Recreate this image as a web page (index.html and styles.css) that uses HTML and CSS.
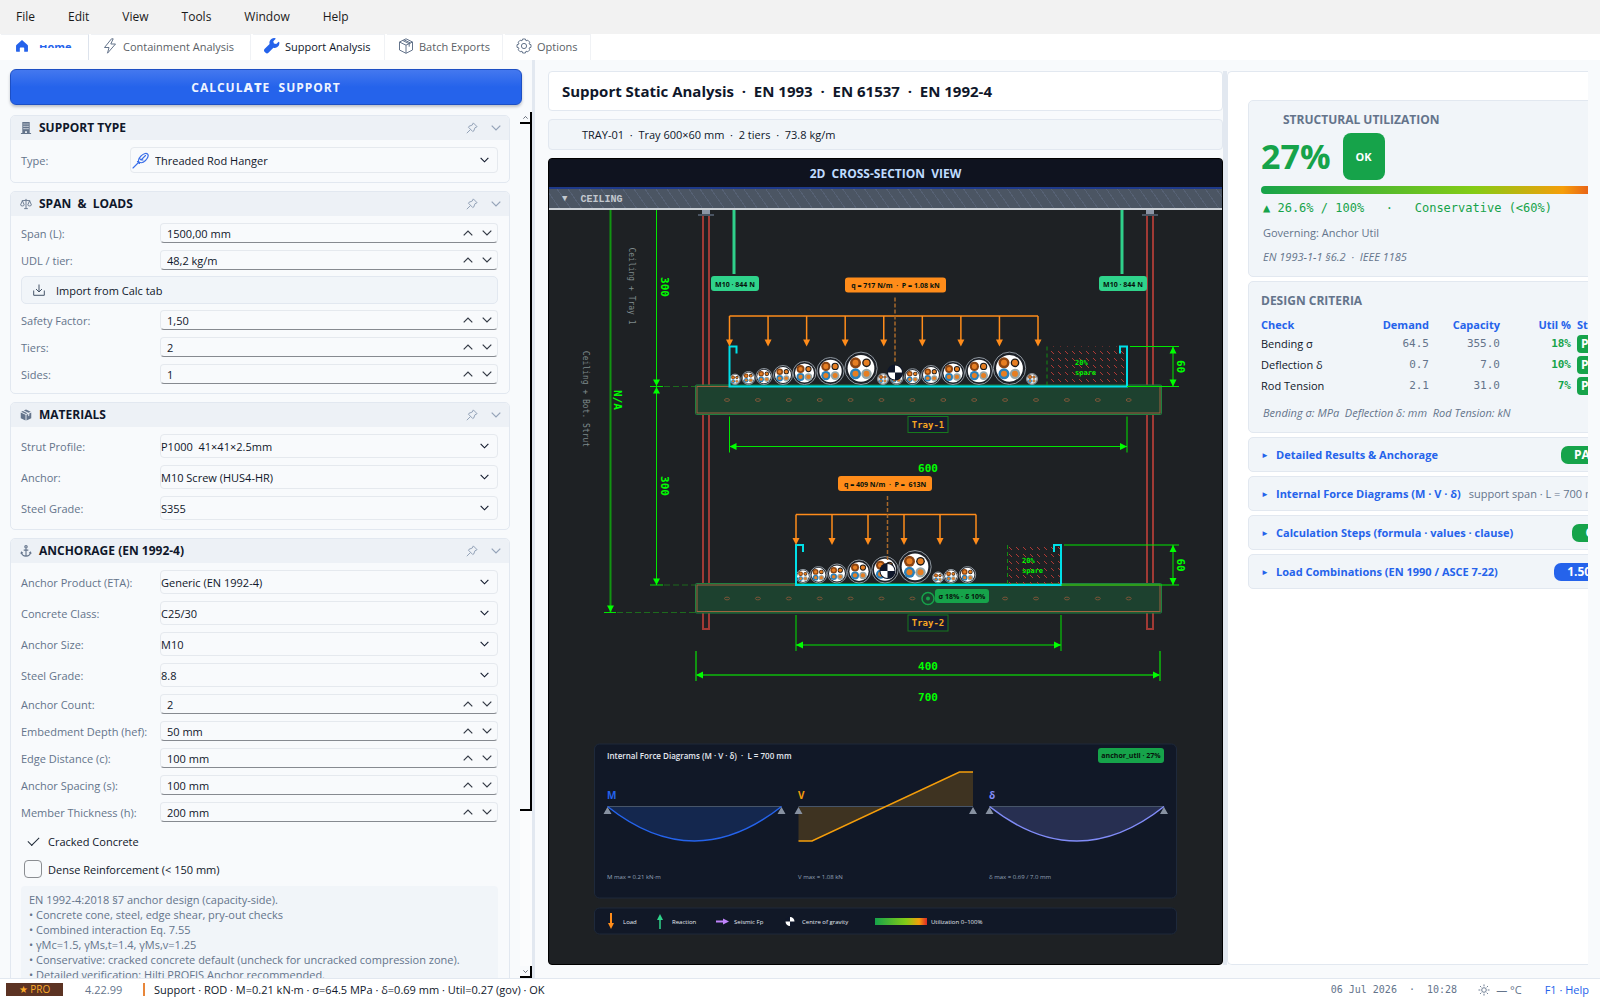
FILE: index.html
```html
<!DOCTYPE html>
<html lang="en">
<head>
    <meta charset="UTF-8">
    <meta name="viewport" content="width=device-width, initial-scale=1.0">
    <title>Support Analysis</title>
    <link rel="stylesheet" href="styles.css">
</head>
<body>
    <!-- icon sprite -->
    <svg class="sprite" aria-hidden="true">
        <symbol id="i-home" viewBox="0 0 16 16"><path fill="currentColor" d="M8 1.2 1.6 6.8c-.3.3-.4.6-.4.9v6c0 .6.4 1 1 1h3.300V10.500c0-.5.3-.8.8-.8h3.400c.5 0 .8.3.8.8v4.200h3.300c.6 0 1-.4 1-1v-6c0-.3-.1-.6-.4-.9z"/></symbol>
        <symbol id="i-bolt" viewBox="0 0 16 16"><path fill="none" stroke="currentColor" stroke-linejoin="round" d="M9.500.8 2.500 9.500H7L5.500 15.200 13.500 6H8.800L11.200.8z"/></symbol>
        <symbol id="i-wrench" viewBox="0 0 16 16"><path fill="currentColor" d="M15.200 4.100a.5.5 0 0 0-.8-.2l-2.200 2.200-2.300-.6-.6-2.300L11.500 1a.5.5 0 0 0-.2-.8A4.700 4.700 0 0 0 5.600 6L1 10.600a2.500 2.500 0 0 0 0 3.700 2.500 2.500 0 0 0 3.700.2l4.700-4.700a4.700 4.700 0 0 0 5.800-5.700z"/></symbol>
        <symbol id="i-box" viewBox="0 0 16 16"><path fill="none" stroke="currentColor" stroke-linejoin="round" d="M8 .8 14.500 4v8L8 15.300 1.500 12V4zM1.500 4 8 7.200 14.500 4M8 7.200v8M4.700 2.500l6.500 3.200v3M6 1.800l6.500 3.200"/></symbol>
        <symbol id="i-boxfill" viewBox="0 0 16 16"><path fill="currentColor" d="M1 4.800v7.400l6.400 3V7.800zM8.600 7.800v7.400l6.400-3V4.800l-2.600 1.300v3l-1.400.7v-3zM1.600 3.700 8 6.800l1.900-1L3.800 2.700zM5.200 2l6 3 3.200-1.300L8 .8z"/></symbol>
        <symbol id="i-gear" viewBox="0 0 16 16"><g fill="none" stroke="currentColor"><path stroke-linejoin="round" d="m6.600 1 2.800 0 .6 1.800 1.800-.6 2 2-.8 1.700 2 .8v2.600l-2 .8.8 1.700-2 2-1.800-.6L9.400 15H6.600L6 13.200l-1.800.6-2-2 .8-1.700-2-.8V6.700l2-.8-.8-1.700 2-2L6 2.800z"/><circle cx="8" cy="8" r="2.600"/></g></symbol>
        <symbol id="i-building" viewBox="0 0 12 13"><path fill="currentColor" fill-rule="evenodd" d="M2 0h8v12h1.500v1H.5v-1H2zM3.300 1.500v1.300h1.200V1.500zm2.100 0v1.300h1.200V1.500zm2.100 0v1.300h1.200V1.500zM3.300 4v1.300h1.200V4zm2.100 0v1.300h1.200V4zm2.100 0v1.300h1.200V4zM3.300 6.500v1.300h1.200V6.500zm2.100 0v1.300h1.200V6.500zm2.100 0v1.300h1.200V6.500zM5 10v2h2v-2z"/></symbol>
        <symbol id="i-scales" viewBox="0 0 13 12"><path fill="none" stroke="currentColor" d="M6.500.5v10.500M4.500 11h4M2 2.500 6.500 2 11 2.500M2.600 2.500.6 7c0 1.500 4 1.500 4 0zM10.400 2.500l-2 4.500c0 1.500 4 1.500 4 0z"/></symbol>
        <symbol id="i-anchor" viewBox="0 0 12 13"><g fill="none" stroke="currentColor" stroke-width="1.2"><circle cx="6" cy="2" r="1.300"/><path d="M6 3.500V12M3.500 5.500h5M1 8c.4 2.500 2.500 4 5 4s4.600-1.500 5-4M.5 9.500 1.100 7.800l1.500 1M11.500 9.500l-.6-1.700-1.500 1"/></g></symbol>
        <symbol id="i-pin" viewBox="0 0 12 12"><path fill="none" stroke="currentColor" stroke-linejoin="round" d="M7.300.9 11.100 4.700 9 5.700 7.700 9 6.800 9.600 2.400 5.200 3 4.300 6.300 3zM4.500 7.500.8 11.200"/></symbol>
        <symbol id="i-down" viewBox="0 0 10 6"><path fill="none" stroke="currentColor" stroke-width="1.200" d="M.7.7 5 5 9.300.7"/></symbol>
        <symbol id="i-up" viewBox="0 0 10 6"><path fill="none" stroke="currentColor" stroke-width="1.200" d="M.7 5.300 5 1l4.300 4.300"/></symbol>
        <symbol id="i-import" viewBox="0 0 12 12"><path fill="none" stroke="currentColor" d="M6 .5v7M3 5l3 3 3-3M.7 6.500v4.800h10.600V6.500"/></symbol>
        <symbol id="i-rod" viewBox="0 0 17 17"><g fill="none" stroke="currentColor" stroke-width="1.100" stroke-linecap="round"><path d="M1 16 6.500 10.500M5.500 9.500 7.500 11.500M7 9.800C5.500 8 7 6 9 4s5-3.500 6.500-2 0 4.500-2 6.500-4.500 3-6.500 1.300zM9 8l4.500-4.500M7.500 6.500 9 8l2 0"/></g></symbol>
        <symbol id="i-sun" viewBox="0 0 13 13"><g fill="none" stroke="currentColor"><circle cx="6.500" cy="6.500" r="2.500"/><path d="M6.500.5v2M6.500 10.500v2M.5 6.500h2M10.500 6.500h2M2.200 2.200l1.400 1.400M9.400 9.400l1.400 1.400M2.200 10.800l1.400-1.400M9.400 3.600l1.400-1.400"/></g></symbol>
    </svg>

    <nav class="menubar">
        <button>File</button>
        <button>Edit</button>
        <button>View</button>
        <button>Tools</button>
        <button>Window</button>
        <button>Help</button>
    </nav>

    <nav class="tabs">
        <a href="#" class="tab home"><svg class="icon16"><use href="#i-home"/></svg><span class="sliver">Home</span></a>
        <a href="#" class="tab"><svg class="icon16"><use href="#i-bolt"/></svg>Containment Analysis</a>
        <a href="#" class="tab current"><svg class="icon16"><use href="#i-wrench"/></svg>Support Analysis</a>
        <a href="#" class="tab"><svg class="icon16"><use href="#i-box"/></svg>Batch Exports</a>
        <a href="#" class="tab"><svg class="icon16"><use href="#i-gear"/></svg>Options</a>
    </nav>

    <main class="workspace">
        <aside class="sidebar">
            <button class="calculate">CALCUL<b>AT</b>E&nbsp; SUPPORT</button>
            <div class="form-area">
                <form class="groups">
                    <section class="group">
                        <header class="group-header">
                            <svg class="icon12"><use href="#i-building"/></svg>
                            <h2>SUPPORT TYPE</h2>
                            <svg class="icon12 muted"><use href="#i-pin"/></svg>
                            <svg class="chevron muted"><use href="#i-down"/></svg>
                        </header>
                        <div class="group-body">
                            <div class="row type-row">
                                <label for="type">Type:</label>
                                <div class="combo tall">
                                    <svg class="combo-icon"><use href="#i-rod"/></svg>
                                    <select id="type"><option>Threaded Rod Hanger</option></select>
                                    <svg class="chevron"><use href="#i-down"/></svg>
                                </div>
                            </div>
                        </div>
                    </section>

                    <section class="group">
                        <header class="group-header">
                            <svg class="icon12"><use href="#i-scales"/></svg>
                            <h2>SPAN&nbsp; &amp;&nbsp; LOADS</h2>
                            <svg class="icon12 muted"><use href="#i-pin"/></svg>
                            <svg class="chevron muted"><use href="#i-down"/></svg>
                        </header>
                        <div class="group-body">
                            <div class="row"><label for="span">Span (L):</label><div class="spin"><input type="text" id="span" value="1500,00 mm"></div></div>
                            <div class="row"><label for="udl">UDL / tier:</label><div class="spin"><input type="text" id="udl" value="48,2 kg/m"></div></div>
                            <button type="button" class="import"><svg class="icon12"><use href="#i-import"/></svg>Import from Calc tab</button>
                            <div class="row"><label for="sf">Safety Factor:</label><div class="spin"><input type="text" id="sf" value="1,50"></div></div>
                            <div class="row"><label for="tiers">Tiers:</label><div class="spin"><input type="text" id="tiers" value="2"></div></div>
                            <div class="row"><label for="sides">Sides:</label><div class="spin"><input type="text" id="sides" value="1"></div></div>
                        </div>
                    </section>

                    <section class="group">
                        <header class="group-header">
                            <svg class="icon12"><use href="#i-boxfill"/></svg>
                            <h2>MATERIALS</h2>
                            <svg class="icon12 muted"><use href="#i-pin"/></svg>
                            <svg class="chevron muted"><use href="#i-down"/></svg>
                        </header>
                        <div class="group-body">
                            <div class="row"><label for="strut">Strut Profile:</label><div class="combo"><select id="strut"><option>P1000&nbsp; 41×41×2.5mm</option></select><svg class="chevron"><use href="#i-down"/></svg></div></div>
                            <div class="row"><label for="anchor">Anchor:</label><div class="combo"><select id="anchor"><option>M10 Screw (HUS4-HR)</option></select><svg class="chevron"><use href="#i-down"/></svg></div></div>
                            <div class="row"><label for="steel">Steel Grade:</label><div class="combo"><select id="steel"><option>S355</option></select><svg class="chevron"><use href="#i-down"/></svg></div></div>
                        </div>
                    </section>

                    <section class="group">
                        <header class="group-header">
                            <svg class="icon12"><use href="#i-anchor"/></svg>
                            <h2>ANCHORAGE (EN 1992-4)</h2>
                            <svg class="icon12 muted"><use href="#i-pin"/></svg>
                            <svg class="chevron muted"><use href="#i-down"/></svg>
                        </header>
                        <div class="group-body">
                            <div class="row"><label for="product">Anchor Product (ETA):</label><div class="combo"><select id="product"><option>Generic (EN 1992-4)</option></select><svg class="chevron"><use href="#i-down"/></svg></div></div>
                            <div class="row"><label for="concrete">Concrete Class:</label><div class="combo"><select id="concrete"><option>C25/30</option></select><svg class="chevron"><use href="#i-down"/></svg></div></div>
                            <div class="row"><label for="size">Anchor Size:</label><div class="combo"><select id="size"><option>M10</option></select><svg class="chevron"><use href="#i-down"/></svg></div></div>
                            <div class="row"><label for="grade">Steel Grade:</label><div class="combo"><select id="grade"><option>8.8</option></select><svg class="chevron"><use href="#i-down"/></svg></div></div>
                            <div class="row"><label for="count">Anchor Count:</label><div class="spin"><input type="text" id="count" value="2"></div></div>
                            <div class="row"><label for="hef">Embedment Depth (hef):</label><div class="spin"><input type="text" id="hef" value="50 mm"></div></div>
                            <div class="row"><label for="edge">Edge Distance (c):</label><div class="spin"><input type="text" id="edge" value="100 mm"></div></div>
                            <div class="row"><label for="spacing">Anchor Spacing (s):</label><div class="spin"><input type="text" id="spacing" value="100 mm"></div></div>
                            <div class="row"><label for="thickness">Member Thickness (h):</label><div class="spin"><input type="text" id="thickness" value="200 mm"></div></div>
                            <div class="checks">
                                <label><input type="checkbox" checked> Cracked Concrete</label>
                                <label><input type="checkbox"> Dense Reinforcement (&lt; 150 mm)</label>
                            </div>
                            <div class="note">
                                EN 1992-4:2018 §7 anchor design (capacity-side).<br>
                                • Concrete cone, steel, edge shear, pry-out checks<br>
                                • Combined interaction Eq. 7.55<br>
                                • γMc=1.5, γMs,t=1.4, γMs,v=1.25<br>
                                • Conservative: cracked concrete default (uncheck for uncracked compression zone).<br>
                                • Detailed verification: Hilti PROFIS Anchor recommended.
                            </div>
                        </div>
                    </section>
                </form>
                <div class="scrollbar">
                    <button class="scroll-button" aria-label="Scroll up"><svg class="scroll-arrow"><use href="#i-up"/></svg></button>
                    <div class="scroll-thumb"></div>
                    <div class="scroll-track"></div>
                    <button class="scroll-button" aria-label="Scroll down"><svg class="scroll-arrow"><use href="#i-down"/></svg></button>
                </div>
            </div>
        </aside>

        <div class="splitter"></div>

        <section class="center">
            <h1 class="page-title">Support Static Analysis&nbsp; ·&nbsp; EN 1993&nbsp; ·&nbsp; EN 61537&nbsp; ·&nbsp; EN 1992-4</h1>
            <div class="summary">TRAY-01&nbsp; ·&nbsp; Tray 600×60 mm&nbsp; ·&nbsp; 2 tiers&nbsp; ·&nbsp; 73.8 kg/m</div>
            <div class="viewer">
                <div class="viewer-title">2D&nbsp; CROSS-SECTION&nbsp; VIEW</div>
                <div class="ceiling"><span class="ceiling-mark">▼</span>CEILING</div>
                <svg class="drawing" id="drawing" viewBox="549 210 673 754" preserveAspectRatio="xMidYMin meet">
                    <defs>
                        <linearGradient id="util-gradient">
                            <stop offset="0" stop-color="#16a34a"/>
                            <stop offset="0.6" stop-color="#84cc16"/>
                            <stop offset="0.85" stop-color="#f59e0b"/>
                            <stop offset="1" stop-color="#dc2626"/>
                        </linearGradient>
                        <pattern id="spare-hatch" width="7" height="7" patternUnits="userSpaceOnUse">
                            <path d="M1 1 4 4" stroke="#b03a35"/>
                        </pattern>
                    </defs>

                    <!-- hanger rods and nuts -->
                    <g class="rod">
                        <rect x="703" y="205" width="6" height="424"/>
                        <rect x="1147" y="205" width="6" height="424"/>
                    </g>
                    <g fill="#6b7280">
                        <rect x="702" y="210" width="8" height="4" fill="#8b95a5"/>
                        <rect x="698" y="214" width="16" height="2" fill="#4b5563"/>
                        <rect x="1146" y="210" width="8" height="4" fill="#8b95a5"/>
                        <rect x="1142" y="214" width="16" height="2" fill="#4b5563"/>
                    </g>

                    <!-- rod reactions -->
                    <path d="M734 208V274M1122 208V274" stroke="#2fd08a" stroke-width="3"/>
                    <rect x="711" y="276" width="48" height="15" rx="3" fill="#2fd38b"/>
                    <rect x="1099" y="276" width="48" height="15" rx="3" fill="#2fd38b"/>
                    <text class="chip" x="735" y="287">M10 · 844 N</text>
                    <text class="chip" x="1123" y="287">M10 · 844 N</text>

                    <g id="tiers-layer"></g>

                    <!-- left hand dimensions -->
                    <g class="dim">
                        <path class="dim-soft" d="M610.500 210V613"/>
                        <path d="M656.500 210V585M650 386.500H663M650 585H663M604 612.500H616"/>
                        <path class="dim-dash" d="M664 386.500H695M664 585H695M617 612.500H695"/>
                    </g>
                    <g class="arrow-head">
                        <path d="M656.500 386l-3.500-6.500h7zM656.500 387l-3.500 6.500h7zM656.500 585l-3.500-6.500h7zM610.500 612l-3.500-6.500h7z"/>
                    </g>
                    <text class="dim-text" transform="translate(661 287) rotate(90)">300</text>
                    <text class="dim-text" transform="translate(661 486) rotate(90)">300</text>
                    <text class="dim-text" transform="translate(614 400) rotate(90)">N/A</text>
                    <text class="dim-note" transform="translate(629 286) rotate(90)">Ceiling + Tray 1</text>
                    <text class="dim-note" transform="translate(583 399) rotate(90)">Ceiling + Bot. Strut</text>

                    <!-- overall width -->
                    <path class="dim-soft" d="M696 651V681M1160 651V681M696 675H1160"/>
                    <path class="arrow-head" d="M696 675l7-3.500v7zM1160 675l-7-3.500v7z"/>
                    <text class="dim-text" x="928" y="701">700</text>

                    <!-- utilization marker on the bottom strut -->
                    <circle cx="928" cy="598.500" r="6" fill="none" stroke="#16a34a" stroke-width="1.500"/>
                    <circle cx="928" cy="598.500" r="2" fill="#16a34a"/>
                    <rect x="935" y="589" width="54" height="14" rx="3" fill="#16a34a"/>
                    <text class="chip" x="962" y="599">σ 18% · δ 10%</text>

                    <!-- internal force diagrams -->
                    <rect class="panel" x="594.500" y="744" width="582" height="154" rx="5"/>
                    <text class="panel-title" x="607" y="759">Internal Force Diagrams (M · V · δ)&#160; ·&#160; L = 700 mm</text>
                    <rect x="1098" y="748" width="66" height="15" rx="3" fill="#16a34a"/>
                    <text class="chip" x="1131" y="758">anchor_util · 27%</text>
                    <text class="force-name" x="607" y="799" fill="#2563eb">M</text>
                    <text class="force-name" x="798" y="799" fill="#f59e0b">V</text>
                    <text class="force-name" x="989" y="799" fill="#818cf8">δ</text>
                    <path d="M607.500 806.500Q694.500 875.500 781.500 806.500z" fill="#2563eb" fill-opacity="0.2"/>
                    <path d="M798.500 806.500V841H812L959.500 772H973V806.500z" fill="#f59e0b" fill-opacity="0.2"/>
                    <path d="M989.500 806.500Q1077 875.500 1164 806.500z" fill="#818cf8" fill-opacity="0.2"/>
                    <path d="M607.500 806.500H781.500M798.500 806.500H973M989.500 806.500H1164" stroke="#475569"/>
                    <g fill="none" stroke-width="1.500">
                        <path d="M607.500 806.500Q694.500 875.500 781.500 806.500" stroke="#2563eb"/>
                        <path d="M798.500 841H812L959.500 772H973" stroke="#f59e0b"/>
                        <path d="M989.500 806.500Q1077 875.500 1164 806.500" stroke="#818cf8"/>
                    </g>
                    <path fill="#8791a1" d="M607.500 807l4 7h-8zM781.500 807l4 7h-8zM798.500 807l4 7h-8zM973 807l4 7h-8zM989.500 807l4 7h-8zM1164 807l4 7h-8z"/>
                    <text class="force-max" x="607" y="879">M max = 0.21 kN·m</text>
                    <text class="force-max" x="798" y="879">V max = 1.08 kN</text>
                    <text class="force-max" x="989" y="879">δ max = 0.69 / 7.0 mm</text>

                    <!-- legend -->
                    <rect class="panel" x="594.500" y="908" width="582" height="26" rx="5"/>
                    <path d="M611 913V924" stroke="#ff8c1a" stroke-width="2"/>
                    <path d="M611 929l-3-6h6z" fill="#ff8c1a"/>
                    <path d="M660 929V918" stroke="#2fd38b" stroke-width="1.500"/>
                    <path d="M660 914l-3 6h6z" fill="#2fd38b"/>
                    <path d="M716 921.500H724" stroke="#c084fc" stroke-width="2"/>
                    <path d="M729 921.500l-6-3v6z" fill="#c084fc"/>
                    <circle cx="790" cy="921.500" r="4.500" fill="#0f172a"/>
                    <path d="M790 921.500V917a4.500 4.500 0 0 1 4.500 4.500zM790 921.500V926a4.500 4.500 0 0 1-4.500-4.500z" fill="#fff"/>
                    <rect x="875" y="918" width="52" height="7" fill="url(#util-gradient)"/>
                    <text class="legend" x="623" y="924">Load</text>
                    <text class="legend" x="672" y="924">Reaction</text>
                    <text class="legend" x="734" y="924">Seismic Fp</text>
                    <text class="legend" x="802" y="924">Centre of gravity</text>
                    <text class="legend" x="931" y="924">Utilization 0–100%</text>
                </svg>
            </div>
        </section>

        <div class="splitter inset"></div>

        <section class="results">
            <div class="results-content">
                <div class="card utilization">
                    <h3>STRUCTURAL UTILIZATION</h3>
                    <div class="score"><span class="score-value">27%</span><span class="score-badge">OK</span></div>
                    <div class="util-bar"></div>
                    <p class="util-line">▲ 26.6% / 100%&nbsp;&nbsp; ·&nbsp;&nbsp; Conservative (&lt;60%)</p>
                    <p class="hint">Governing: Anchor Util</p>
                    <p class="hint"><i>EN 1993-1-1 §6.2&nbsp; ·&nbsp; IEEE 1185</i></p>
                </div>
                <div class="card criteria">
                    <h3>DESIGN CRITERIA</h3>
                    <table>
                        <thead>
                            <tr><th>Check</th><th>Demand</th><th>Capacity</th><th>Util %</th><th>Status</th></tr>
                        </thead>
                        <tbody>
                            <tr><td>Bending σ</td><td>64.5</td><td>355.0</td><td>18%</td><td><span class="pass">PASS</span></td></tr>
                            <tr><td>Deflection δ</td><td>0.7</td><td>7.0</td><td>10%</td><td><span class="pass">PASS</span></td></tr>
                            <tr><td>Rod Tension</td><td>2.1</td><td>31.0</td><td>7%</td><td><span class="pass">PASS</span></td></tr>
                        </tbody>
                    </table>
                    <p class="hint"><i>Bending σ: MPa&nbsp; Deflection δ: mm&nbsp; Rod Tension: kN</i></p>
                </div>
                <button class="fold"><span class="fold-arrow">►</span>Detailed Results &amp; Anchorage<span class="pill">PASS</span></button>
                <button class="fold"><span class="fold-arrow">►</span>Internal Force Diagrams (M · V · δ)<span class="fold-note">support span · L = 700 mm</span></button>
                <button class="fold"><span class="fold-arrow">►</span>Calculation Steps (formula · values · clause)<span class="pill">OK</span></button>
                <button class="fold"><span class="fold-arrow">►</span>Load Combinations (EN 1990 / ASCE 7-22)<span class="pill blue">1.50 G</span></button>
            </div>
        </section>
    </main>

    <footer class="statusbar">
        <span class="pro">★ PRO</span>
        <span class="version">4.22.99</span>
        <span class="message">Support · ROD · M=0.21 kN·m · σ=64.5 MPa · δ=0.69 mm · Util=0.27 (gov) · OK</span>
        <span class="clock">06 Jul 2026&nbsp; ·&nbsp; 10:28</span>
        <span class="weather"><svg class="icon12"><use href="#i-sun"/></svg>— °C</span>
        <a href="#" class="help">F1 · Help</a>
    </footer>

    <script src="drawing.js"></script>
</body>
</html>
```
FILE: styles.css
```css
* {
    box-sizing: border-box;
}
body {
    margin: 0;
    height: 100vh;
    display: flex;
    flex-direction: column;
    overflow: hidden;
    background-color: #f8fafc;
    color: #0f172a;
    font-family: "Open Sans", "Noto Sans", sans-serif;
    font-size: 11px;
    line-height: 15px;
}
h1, h2, h3, p {
    margin: 0;
}
button, input, select {
    font: inherit;
    color: inherit;
    margin: 0;
    padding: 0;
    border: none;
    background: none;
}
a {
    color: inherit;
    text-decoration: none;
}
svg {
    display: block;
    flex: none;
}
.sprite {
    position: absolute;
    width: 0;
    height: 0;
}
.icon16 {
    width: 16px;
    height: 16px;
}
.icon12 {
    width: 12px;
    height: 12px;
}
.chevron {
    width: 10px;
    height: 6px;
}

/* menu and tabs */
.menubar {
    display: flex;
    gap: 1px;
    flex: none;
    height: 34px;
    padding-bottom: 1px;
    background-color: #f2f2f2;
}
.menubar button {
    padding: 0 16px;
    font-size: 12px;
    color: #1a1a1a;
}
.tabs {
    display: grid;
    grid-template-columns: 88px 160px 132px 116px 86px;
    gap: 2px;
    flex: none;
    height: 26px;
    padding-left: 1px;
    background-color: #ffffff;
}
.tab {
    display: flex;
    align-items: center;
    gap: 5px;
    padding: 0 0 3px 11px;
    border-right: 1px solid #f0f2f5;
    border-top: 1px solid #f0f2f5;
    color: #5b5f66;
}
.tab .icon16 {
    color: #64748b;
}
.tab.current {
    color: #0f172a;
}
.tab.home, .tab.home .icon16, .tab.current .icon16 {
    color: #2563eb;
}
.tab.home {
    gap: 10px;
    padding-left: 14px;
    border-right: 1px solid #dde3ec;
}
.tab.home .icon16 {
    width: 14px;
    height: 14px;
}
.sliver {
    height: 3px;
    line-height: 3px;
    overflow: hidden;
    font-weight: 700;
}

/* main columns */
.workspace {
    flex: 1;
    min-height: 0;
    display: grid;
    grid-template-columns: 532px 3px minmax(0, 1fr) 4px 361px;
    padding-right: 12px;
}
.splitter {
    background-color: #e2e8f0;
}
.splitter.inset {
    margin: 11px 0 13px;
}

/* sidebar */
.sidebar {
    display: flex;
    flex-direction: column;
    min-height: 0;
    padding: 9px 0 0 10px;
}
.calculate {
    flex: none;
    height: 36px;
    margin: 0 10px 7px 0;
    border: 1px solid #1d4fc4;
    border-radius: 6px;
    background: linear-gradient(#4478ef, #2563eb 50%);
    box-shadow: 0 2px 3px rgba(15, 23, 42, 0.25);
    color: #eff4ff;
    font-size: 12px;
    font-weight: 700;
    letter-spacing: 1px;
}
.calculate b {
    font-size: 13px;
    font-weight: 800;
}
.form-area {
    flex: 1;
    min-height: 0;
    display: flex;
    gap: 10px;
}
.groups {
    flex: 1;
    display: flex;
    flex-direction: column;
    gap: 8px;
    padding-top: 3px;
    overflow: hidden;
}
.group {
    flex: none;
    border: 1px solid #e2e8f0;
    border-radius: 5px;
}
.group-header {
    display: flex;
    align-items: center;
    height: 24px;
    padding: 0 8px 0 9px;
    background-color: #edf1f6;
    border-radius: 4px 4px 0 0;
    color: #64748b;
}
.group-header h2 {
    flex: 1;
    margin-left: 7px;
    font-size: 12px;
    font-weight: 700;
    line-height: 16px;
    color: #0f172a;
}
.group-header .chevron {
    margin-left: 13px;
}
.muted {
    color: #94a3b8;
}
.group-body {
    display: flex;
    flex-direction: column;
    gap: 7px;
    padding: 7px 11px 9px 10px;
}
.row {
    display: grid;
    grid-template-columns: 139px 1fr;
    align-items: center;
}
.type-row {
    grid-template-columns: 109px 1fr;
}
.row > label {
    color: #64748b;
}
.combo {
    display: grid;
    grid-template-columns: auto 1fr;
    align-items: center;
    height: 24px;
    border: 1px solid #e5e9ee;
    border-radius: 4px;
}
.combo.tall {
    height: 26px;
}
.combo select {
    grid-area: 1 / 2;
    appearance: none;
    width: 100%;
    height: 100%;
}
.combo .chevron {
    grid-area: 1 / 2;
    justify-self: end;
    width: 9px;
    margin-right: 8px;
    pointer-events: none;
}
.combo-icon {
    width: 17px;
    height: 17px;
    margin: 0 6px 0 1px;
    color: #3b6fe8;
}
.spin {
    display: flex;
    align-items: center;
    height: 20px;
    border: 1px solid #e5e9ee;
    border-bottom-color: #868a90;
    border-radius: 4px;
}
.spin input {
    flex: 1;
    min-width: 0;
    padding-left: 6px;
}
.spin button {
    width: 19px;
    height: 18px;
    display: grid;
    place-items: center;
    color: #333a45;
}
.spin button:last-child {
    margin-right: 1px;
}
.import {
    display: flex;
    align-items: center;
    gap: 11px;
    height: 28px;
    margin: -1px 0;
    padding-left: 11px;
    border: 1px solid #e2e8f0;
    border-radius: 5px;
    background-color: #f1f5f9;
}
.import svg {
    color: #475569;
}
.checks {
    margin: -2px 0 -4px;
}
.checks label {
    display: flex;
    align-items: center;
    gap: 6px;
    height: 28px;
    padding-left: 3px;
}
.checks input {
    appearance: none;
    display: grid;
    place-items: center;
    width: 18px;
    height: 18px;
    border: 1px solid #8a8d91;
    border-radius: 4px;
}
.checks input:checked {
    border-color: transparent;
}
.checks input:checked::before {
    content: "";
    width: 10px;
    height: 5px;
    margin-top: -3px;
    border: solid #1f2937;
    border-width: 0 0 1px 1px;
    transform: rotate(-45deg);
}
.note {
    padding: 6px 8px;
    border-radius: 4px;
    background-color: #f1f5f9;
    color: #64748b;
}
.scrollbar {
    display: flex;
    flex-direction: column;
    width: 12px;
}
.scroll-button {
    display: grid;
    place-items: center;
    height: 12px;
    background-color: #f8fafc;
    border-right: 2px solid #000000;
    border-bottom: 2px solid #000000;
}
.scroll-arrow {
    width: 5px;
    height: 3px;
}
.scroll-thumb {
    flex: 687;
    border-right: 2px solid #000000;
    border-bottom: 2px solid #000000;
    background-color: #f8fafc;
}
.scroll-track {
    flex: 155;
    background-color: #fbfcfd;
}

/* center column */
.center {
    display: flex;
    flex-direction: column;
    gap: 8px;
    padding: 11px 0 13px 13px;
}
.page-title {
    flex: none;
    padding: 0 13px;
    border: 1px solid #e2e8f0;
    border-radius: 4px;
    background-color: #ffffff;
    font-size: 15px;
    font-weight: 700;
    line-height: 38px;
}
.summary {
    flex: none;
    padding: 0 33px;
    border: 1px solid #e2e8f0;
    border-radius: 4px;
    background-color: #f1f5f9;
    line-height: 29px;
}
.viewer {
    flex: 1;
    min-height: 0;
    display: flex;
    flex-direction: column;
    border: 1px solid #000000;
    border-radius: 4px;
    overflow: hidden;
    background-color: #1e2124;
}
.viewer-title {
    flex: none;
    height: 30px;
    line-height: 30px;
    text-align: center;
    background-color: #0f131f;
    border-bottom: 2px solid #1e3a8a;
    color: #bfdbfe;
    font-size: 12px;
    font-weight: 700;
}
.ceiling {
    flex: none;
    display: flex;
    gap: 13px;
    height: 21px;
    padding-left: 13px;
    border-bottom: 2px solid #cbd0d6;
    background: repeating-linear-gradient(55deg, #4b5563 0 8px, #566174 8px 9px);
    color: #c3c8cf;
    font: bold 10px/21px "Liberation Mono", monospace;
}
.ceiling-mark {
    font-size: 9px;
}
.drawing {
    flex: 1;
    min-height: 0;
    width: 100%;
}

/* drawing parts */
.drawing text {
    font-family: "Open Sans", "Noto Sans", sans-serif;
}
.rod {
    fill: none;
    stroke: #a03a35;
    stroke-width: 2;
}
.drawing .chip {
    font-size: 7px;
    font-weight: 700;
    text-anchor: middle;
    fill: #06130c;
}
.dim {
    fill: none;
    stroke: #00e600;
}
.dim-soft {
    fill: none;
    stroke: #119411;
    stroke-width: 2;
}
.dim-dash {
    stroke: #1d6b1d;
    stroke-dasharray: 6 3;
}
.arrow-head {
    fill: #00ff00;
}
.drawing .dim-text {
    font: bold 11px "DejaVu Sans Mono", monospace;
    text-anchor: middle;
    fill: #00ff00;
}
.drawing .dim-note {
    font: 8px "DejaVu Sans Mono", monospace;
    text-anchor: middle;
    fill: #7f8a8c;
}
.drawing .tray-name {
    font: bold 9px "DejaVu Sans Mono", monospace;
    text-anchor: middle;
    fill: #f5a623;
}
.drawing .spare {
    font: bold 7px "DejaVu Sans Mono", monospace;
    fill: #00f000;
}
.panel {
    fill: #111827;
    stroke: #1e293b;
}
.panel-title {
    font-size: 8px;
    font-weight: 600;
    fill: #e5e9f0;
}
.force-name {
    font-size: 10px;
    font-weight: 700;
}
.force-max {
    font-size: 6px;
    fill: #94a3b8;
}
.legend {
    font-size: 6px;
    fill: #e2e8f0;
}

/* results column */
.results {
    margin: 11px 0 13px;
    overflow: hidden;
    border: 1px solid #e2e8f0;
    border-right: none;
    border-radius: 5px 0 0 5px;
    background-color: #ffffff;
}
.results-content {
    display: flex;
    flex-direction: column;
    gap: 4px;
    width: 401px;
    padding: 28px 0 0 20px;
}
.card {
    border: 1px solid #e2e8f0;
    border-radius: 5px;
    background-color: #f1f5f9;
    padding: 0 12px;
}
.card h3 {
    font-size: 12px;
    font-weight: 700;
    color: #64748b;
}
.utilization {
    height: 177px;
}
.utilization h3 {
    padding: 11px 0 0 22px;
}
.score {
    display: flex;
    align-items: center;
    gap: 12px;
    margin: 6px 0;
}
.score-value {
    font-size: 34px;
    font-weight: 700;
    line-height: 47px;
    color: #16a34a;
}
.score-badge {
    width: 42px;
    height: 47px;
    border-radius: 8px;
    background-color: #16a34a;
    color: #ffffff;
    font-weight: 700;
    line-height: 48px;
    text-align: center;
}
.util-bar {
    height: 8px;
    border-radius: 4px;
    background: linear-gradient(90deg, #16a34a, #84cc16 60%, #f59e0b 85%, #dc2626);
}
.util-line {
    padding: 7px 0 0 2px;
    font: 12px/15px "DejaVu Sans Mono", monospace;
    color: #16a34a;
}
.hint {
    padding: 9px 2px 0;
    color: #64748b;
}
.criteria {
    height: 152px;
}
.criteria h3 {
    padding-top: 11px;
}
.criteria table {
    margin-top: 7px;
    border-collapse: collapse;
    table-layout: fixed;
    width: 354px;
}
.criteria th, .criteria td {
    height: 21px;
    padding: 0;
    text-align: right;
}
.criteria th {
    height: 18px;
    color: #2563eb;
    font-weight: 700;
}
.criteria th:first-child, .criteria td:first-child {
    width: 97px;
    text-align: left;
}
.criteria th:last-child, .criteria td:last-child {
    padding-left: 6px;
    width: 44px;
    text-align: left;
}
.criteria td:nth-child(2), .criteria td:nth-child(3), .criteria td:nth-child(4) {
    font-family: "DejaVu Sans Mono", monospace;
    color: #64748b;
}
.criteria td:nth-child(4) {
    font-weight: 700;
    color: #16a34a;
}
.pass {
    display: inline-block;
    height: 18px;
    padding: 0 4px;
    border-radius: 4px;
    background-color: #16a34a;
    color: #ffffff;
    font-size: 12px;
    font-weight: 700;
    line-height: 18px;
}
.fold {
    display: flex;
    align-items: center;
    height: 35px;
    padding: 0 12px;
    border: 1px solid #e2e8f0;
    border-radius: 5px;
    background-color: #f1f5f9;
    color: #2563eb;
    font-weight: 700;
    text-align: left;
    white-space: nowrap;
}
.fold-arrow {
    width: 15px;
    font-size: 8px;
}
.fold-note {
    margin-left: 8px;
    color: #64748b;
    font-weight: 400;
}
.pill {
    margin-left: auto;
    padding: 0 13px;
    border-radius: 7px;
    background-color: #16a34a;
    color: #ffffff;
    font-size: 12px;
    font-weight: 700;
    line-height: 18px;
}
.pill.blue {
    background-color: #2563eb;
}

/* status bar */
.statusbar {
    flex: none;
    display: flex;
    align-items: center;
    height: 22px;
    padding: 0 11px 0 6px;
    border-top: 1px solid #e2e8f0;
    background-color: #ffffff;
}
.pro {
    width: 57px;
    background-color: #5c3323;
    color: #fbaa28;
    font-size: 10px;
    line-height: 13px;
    text-align: center;
}
.version {
    width: 80px;
    padding-left: 22px;
    color: #64748b;
}
.message {
    flex: 1;
    padding-left: 9px;
    border-left: 2px solid #e8863a;
    line-height: 13px;
}
.clock {
    font: 10px "DejaVu Sans Mono", monospace;
    color: #64748b;
}
.weather {
    display: flex;
    align-items: center;
    gap: 6px;
    margin: 0 23px 0 21px;
    color: #64748b;
}
.help {
    color: #2563eb;
}
```
FILE: drawing.js
```js
// Spin buttons for every numeric field
document.querySelectorAll('.spin').forEach(function (spin) {
    ['up', 'down'].forEach(function (dir) {
        spin.insertAdjacentHTML('beforeend',
            '<button type="button" aria-label="' + dir + '"><svg class="chevron"><use href="#i-' + dir + '"/></svg></button>');
    });
});

// Tiers of the cross-section: y is the tray bottom, cables are [cx, r]
const tiers = [
    {
        name: 'Tray-1', width: 600, y: 386.5, left: 729.5, right: 1127, loadTo: 1038, arrows: 9,
        chip: { x: 845, w: 101, text: 'q = 717 N/m\u00a0 ·\u00a0 P = 1.08 kN' },
        cog: 895, spare: 1047, spareText: 1075,
        cables: [[735, 5.7], [748.5, 7], [764, 8.5], [783, 10], [804.5, 12], [830.5, 14], [861, 16.7], [883, 6],
            [896.5, 7], [912.5, 8.4], [931, 10], [953, 12], [979, 14], [1009.5, 16.7], [1032, 6]]
    },
    {
        name: 'Tray-2', width: 400, y: 585, left: 796, right: 1061, loadTo: 976, arrows: 6,
        chip: { x: 838, w: 94, text: 'q = 409 N/m\u00a0 ·\u00a0 P =\u00a0 613N' },
        cog: 887.5, spare: 1007.5, spareText: 1022,
        cables: [[803, 7.3], [818.5, 8.7], [837, 10], [859, 12], [885, 13.7], [915, 16.7], [938, 6], [951, 7.3], [967.5, 8.7]]
    }
];

function cable(cx, r, bottom) {
    const cy = bottom - r;
    const o = r * 0.33;
    const cores = [[-o, -o, '#8b4513', 0.33], [o, -o, '#1a1a1a', 0.26], [-o, o, '#2a80b9', 0.33], [o, o, '#95a5a6', 0.31]];
    let s = '<circle cx="' + cx + '" cy="' + cy + '" r="' + (r - 0.5) + '" fill="#1c2027" stroke="#8f979f"/>' +
        '<circle cx="' + cx + '" cy="' + cy + '" r="' + r * 0.8 + '" fill="#fff"/>';
    cores.forEach(function (c) {
        s += '<circle cx="' + (cx + c[0]) + '" cy="' + (cy + c[1]) + '" r="' + r * c[3] + '" fill="' + c[2] + '"/>' +
            '<circle cx="' + (cx + c[0]) + '" cy="' + (cy + c[1]) + '" r="' + r * 0.18 + '" fill="#e67e22"/>';
    });
    return s;
}

function drawTier(t) {
    const y = t.y, top = y - 40, load = y - 70.5;
    let s = '';

    // strut with slots
    s += '<rect x="695.5" y="' + (y - 1.5) + '" width="466" height="29.5" rx="1" fill="#1d412f" stroke="#1f8040"/>' +
        '<rect x="697" y="' + y + '" width="463" height="26.5" fill="none" stroke="#a0623f"/>';
    for (let i = 0; i < 14; i++) {
        s += '<ellipse cx="' + (727 + i * 30.9) + '" cy="' + (y + 13.5) + '" rx="2.5" ry="1.4" fill="none" stroke="#7d5538"/>';
    }

    // spare capacity zone
    s += '<rect x="' + t.spare + '" y="' + top + '" width="' + (t.right - t.spare) + '" height="40" fill="url(#spare-hatch)"/>' +
        '<path d="M' + t.spare + ' ' + top + 'v40" stroke="#128a12" stroke-dasharray="4 3"/>' +
        '<text class="spare" x="' + t.spareText + '" y="' + (y - 22) + '">20%</text>' +
        '<text class="spare" x="' + t.spareText + '" y="' + (y - 12) + '">spare</text>';

    t.cables.forEach(function (c) { s += cable(c[0], c[1], y - 1.5); });

    // tray profile
    s += '<path fill="none" stroke="#00e0e8" stroke-width="2" d="M' + (t.left + 7) + ' ' + (top + 7) + 'v-7h-7v40H' + t.right + 'v-40h-7v7"/>';

    // distributed load
    s += '<path stroke="#ff8c1a" stroke-width="1.5" d="M' + t.left + ' ' + load + 'H' + t.loadTo + '"/>';
    const step = (t.loadTo - t.left) / (t.arrows - 1);
    for (let i = 0; i < t.arrows; i++) {
        const x = t.left + i * step;
        s += '<path stroke="#ff8c1a" stroke-width="1.5" d="M' + x + ' ' + load + 'V' + (top - 6) + '"/>' +
            '<path fill="#ff8c1a" d="M' + x + ' ' + top + 'l-3.5 -7h7z"/>';
    }
    s += '<rect x="' + t.chip.x + '" y="' + (y - 109) + '" width="' + t.chip.w + '" height="15" rx="3" fill="#ff8c1a"/>' +
        '<text class="chip" x="' + (t.chip.x + t.chip.w / 2) + '" y="' + (y - 98.5) + '">' + t.chip.text + '</text>' +
        '<path stroke="#a8682a" stroke-width="1.5" stroke-dasharray="4 2" d="M' + t.cog + ' ' + (y - 89) + 'v66"/>';

    // centre of gravity
    const gy = y - 14;
    s += '<circle cx="' + t.cog + '" cy="' + gy + '" r="8" fill="#0f172a"/>' +
        '<path fill="#fff" d="M' + t.cog + ' ' + gy + 'v-7a7 7 0 0 1 7 7zM' + t.cog + ' ' + gy + 'v7a7 7 0 0 1 -7 -7z"/>';

    // name plate
    s += '<rect x="908" y="' + (y + 30) + '" width="40" height="16" fill="#171a2e" stroke="#177a1c"/>' +
        '<text class="tray-name" x="928" y="' + (y + 41) + '">' + t.name + '</text>';

    // tray width and side height
    s += '<path class="dim" d="M' + t.left + ' ' + (y + 30) + 'v36M' + t.right + ' ' + (y + 30) + 'v36M' + t.left + ' ' + (y + 60) + 'H' + t.right + '"/>' +
        '<path class="dim" d="M' + (t.right + 3) + ' ' + top + 'H1179M' + t.right + ' ' + y + 'H1179M1173 ' + top + 'v40"/>' +
        '<path class="arrow-head" d="M' + t.left + ' ' + (y + 60) + 'l7 -3.5v7zM' + t.right + ' ' + (y + 60) + 'l-7 -3.5v7z' +
        'M1173 ' + top + 'l-3.5 7h7zM1173 ' + y + 'l-3.5 -7h7z"/>' +
        '<text class="dim-text" x="928" y="' + (y + 85) + '">' + t.width + '</text>' +
        '<text class="dim-text" transform="translate(1177 ' + (y - 20) + ') rotate(90)">60</text>';
    return s;
}

document.getElementById('tiers-layer').innerHTML = tiers.map(drawTier).join('');
```
